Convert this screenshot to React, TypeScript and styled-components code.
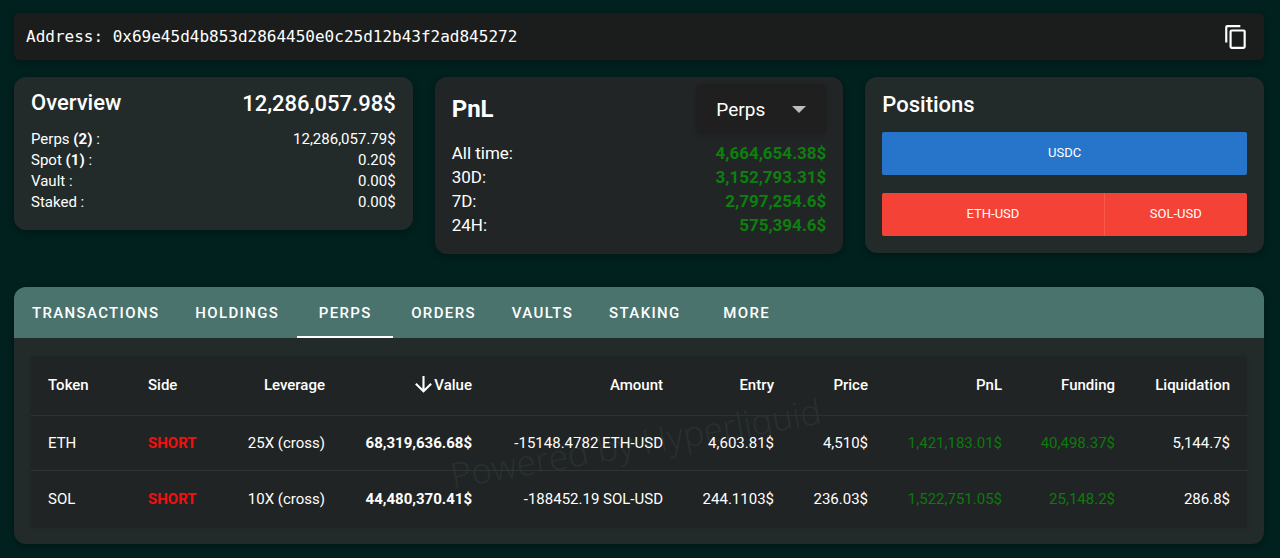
import React from "react";
import styled, { createGlobalStyle } from "styled-components";

const GlobalStyle = createGlobalStyle`
  *, *::before, *::after { box-sizing: border-box; }
  body {
    margin: 0;
    background: #00211e;
    color: #fff;
    font-family: Roboto, "Liberation Sans", sans-serif;
    font-size: 15px;
    line-height: 21px;
  }
`;

const Page = styled.main`
  padding: 13px 16px 14px 14px;
`;

const AddressBar = styled.header`
  display: flex;
  align-items: center;
  justify-content: space-between;
  height: 47px;
  padding: 0 15px 0 12px;
  border-radius: 6px;
  background: #1b1d1c;
  box-shadow: 0 2px 6px rgba(0, 0, 0, 0.3);
`;

const AddressText = styled.span`
  font-family: "DejaVu Sans Mono", "Liberation Mono", monospace;
  font-size: 16px;
`;

const IconButton = styled.button`
  display: flex;
  padding: 0;
  border: 0;
  background: none;
  color: #fff;
  cursor: pointer;
`;

const Cards = styled.div`
  display: grid;
  grid-template-columns: 399fr 409fr 399fr;
  gap: 22px;
  align-items: start;
  margin-top: 17px;
`;

const Card = styled.section<{ $tone?: string }>`
  padding: 10px 17px 17px;
  border-radius: 12px;
  background: ${(p) => p.$tone ?? "#232b2a"};
  box-shadow: 0 2px 6px rgba(0, 0, 0, 0.3);
`;

const CardHead = styled.div<{ $height: number; $gap: number }>`
  display: flex;
  align-items: center;
  justify-content: space-between;
  height: ${(p) => p.$height}px;
  margin-bottom: ${(p) => p.$gap}px;
`;

const CardTitle = styled.h2<{ $bold?: boolean }>`
  margin: 0;
  font-size: ${(p) => (p.$bold ? 24 : 22)}px;
  font-weight: ${(p) => (p.$bold ? 700 : 500)};
  line-height: 32px;
`;

const Total = styled.strong`
  font-size: 22px;
  font-weight: 500;
`;

const Stats = styled.dl<{ $large?: boolean }>`
  margin: 0;
  font-size: ${(p) => (p.$large ? 17 : 15)}px;
  line-height: ${(p) => (p.$large ? 24 : 21)}px;
`;

const StatRow = styled.div`
  display: flex;
  justify-content: space-between;
`;

const StatLabel = styled.dt``;

const StatValue = styled.dd<{ $gain?: boolean }>`
  margin: 0;
  color: ${(p) => (p.$gain ? "#0c800c" : "inherit")};
  font-weight: ${(p) => (p.$gain ? 700 : 400)};
`;

const SelectBox = styled.div`
  position: relative;
  width: 130px;
`;

const PeriodSelect = styled.select`
  width: 100%;
  height: 50px;
  padding: 0 40px 0 20px;
  border: 0;
  border-radius: 5px;
  background: #1f1f1f;
  color: #fff;
  font: inherit;
  font-size: 19px;
  appearance: none;
  box-shadow: 0 1px 4px rgba(0, 0, 0, 0.2);
`;

const Caret = styled.svg`
  position: absolute;
  top: 22px;
  right: 20px;
  pointer-events: none;
`;

const Bar = styled.div`
  display: flex;
  height: 43px;
  border-radius: 2px;
  overflow: hidden;
  & + & { margin-top: 18px; }
`;

const Segment = styled.button<{ $color: string; $share: number }>`
  flex: ${(p) => p.$share} 1 0;
  padding: 0 0 2px;
  border: 0;
  background: ${(p) => p.$color};
  color: #fff;
  font: inherit;
  font-size: 13px;
  cursor: pointer;
  & + & { border-left: 1px solid #f95a45; }
`;

const Panel = styled.section`
  margin-top: 33px;
  border-radius: 12px;
  background: #232b2a;
  overflow: hidden;
  box-shadow: 0 2px 6px rgba(0, 0, 0, 0.3);
`;

const Tabs = styled.div`
  display: flex;
  height: 51px;
  background: #4b736e;
`;

const Tab = styled.button<{ $active?: boolean }>`
  min-width: 96px;
  padding: 4px 18px 0;
  border: 0;
  border-bottom: 2px solid ${(p) => (p.$active ? "#fff" : "transparent")};
  background: none;
  color: #fff;
  font: inherit;
  font-weight: 500;
  letter-spacing: 0.09em;
  text-transform: uppercase;
  cursor: pointer;
`;

const TableWrap = styled.div`
  position: relative;
  margin: 18px 17px 16px;
  padding-bottom: 1px;
  background: #212424;
  box-shadow: 0 0 2px #212424;
`;

const Table = styled.table`
  position: relative;
  width: 100%;
  table-layout: fixed;
  border-collapse: separate;
  border-spacing: 0;
`;

const Col = styled.col<{ $width: number }>`
  width: ${(p) => p.$width}px;
`;

const HeadCell = styled.th<{ $left?: boolean }>`
  height: 60px;
  padding: 0 18px 0 17px;
  border-bottom: 1px solid #2b3231;
  font-weight: 500;
  text-align: ${(p) => (p.$left ? "left" : "right")};
  white-space: nowrap;
`;

const SortArrow = styled.svg`
  margin-right: 2px;
  vertical-align: -3px;
`;

const Cell = styled.td<{ $left?: boolean; $bold?: boolean; $color?: string }>`
  height: 55px;
  padding: 0 18px 0 17px;
  color: ${(p) => p.$color ?? "inherit"};
  font-weight: ${(p) => (p.$bold ? 700 : 400)};
  text-align: ${(p) => (p.$left ? "left" : "right")};
  white-space: nowrap;
  tr:not(:last-child) > & { border-bottom: 1px solid #2e3534; }
  tr:last-child > & { height: 56px; }
`;

const Watermark = styled.div`
  position: absolute;
  inset: 0;
  display: flex;
  align-items: center;
  justify-content: center;
  padding-right: 6px;
  color: #28312f;
  font-family: "Open Sans", sans-serif;
  font-size: 35px;
  font-weight: 300;
  pointer-events: none;
  & > span { transform: rotate(-10deg); }
`;

const RED = "#f01010";
const GREEN = "#0c7a0c";

const overview = [
  { label: "Perps", count: "(2)", value: "12,286,057.79$" },
  { label: "Spot", count: "(1)", value: "0.20$" },
  { label: "Vault", value: "0.00$" },
  { label: "Staked", value: "0.00$" },
];

const pnl = [
  ["All time:", "4,664,654.38$"],
  ["30D:", "3,152,793.31$"],
  ["7D:", "2,797,254.6$"],
  ["24H:", "575,394.6$"],
];

const tabs = ["Transactions", "Holdings", "Perps", "Orders", "Vaults", "Staking", "More"];

const columns = [
  { name: "Token", width: 100, left: true },
  { name: "Side", width: 96, left: true },
  { name: "Leverage", width: 116 },
  { name: "Value", width: 147, sorted: true, bold: true },
  { name: "Amount", width: 191 },
  { name: "Entry", width: 111 },
  { name: "Price", width: 94 },
  { name: "PnL", width: 134, color: GREEN },
  { name: "Funding", width: 113, color: GREEN },
  { name: "Liquidation", width: 115 },
];

const rows = [
  ["ETH", "SHORT", "25X (cross)", "68,319,636.68$", "-15148.4782 ETH-USD", "4,603.81$", "4,510$", "1,421,183.01$", "40,498.37$", "5,144.7$"],
  ["SOL", "SHORT", "10X (cross)", "44,480,370.41$", "-188452.19 SOL-USD", "244.1103$", "236.03$", "1,522,751.05$", "25,148.2$", "286.8$"],
];

export default function App() {
  return (
    <Page>
      <GlobalStyle />
      <AddressBar>
        <AddressText>Address: 0x69e45d4b853d2864450e0c25d12b43f2ad845272</AddressText>
        <IconButton aria-label="Copy address">
          <svg width="26" height="26" viewBox="0 0 24 24" fill="currentColor">
            <path d="M19,21H8V7H19M19,5H8A2,2 0 0,0 6,7V21A2,2 0 0,0 8,23H19A2,2 0 0,0 21,21V7A2,2 0 0,0 19,5M16,1H4A2,2 0 0,0 2,3V17H4V3H16V1Z" />
          </svg>
        </IconButton>
      </AddressBar>

      <Cards>
        <Card>
          <CardHead $height={32} $gap={10}>
            <CardTitle>Overview</CardTitle>
            <Total>12,286,057.98$</Total>
          </CardHead>
          <Stats>
            {overview.map((s) => (
              <StatRow key={s.label}>
                <StatLabel>
                  {s.label} {s.count && <b>{s.count} </b>}:
                </StatLabel>
                <StatValue>{s.value}</StatValue>
              </StatRow>
            ))}
          </Stats>
        </Card>

        <Card $tone="#222526">
          <CardHead $height={44} $gap={10}>
            <CardTitle $bold>PnL</CardTitle>
            <SelectBox>
              <PeriodSelect aria-label="PnL type" defaultValue="Perps">
                <option>Perps</option>
                <option>Spot</option>
              </PeriodSelect>
              <Caret width="14" height="7" viewBox="0 0 14 7">
                <path d="M0 0H14L7 7Z" fill="#bcbcbc" />
              </Caret>
            </SelectBox>
          </CardHead>
          <Stats $large>
            {pnl.map(([label, value]) => (
              <StatRow key={label}>
                <StatLabel>{label}</StatLabel>
                <StatValue $gain>{value}</StatValue>
              </StatRow>
            ))}
          </Stats>
        </Card>

        <Card>
          <CardHead $height={36} $gap={9}>
            <CardTitle>Positions</CardTitle>
          </CardHead>
          <Bar>
            <Segment $color="#2775ca" $share={1}>USDC</Segment>
          </Bar>
          <Bar>
            <Segment $color="#f44336" $share={222}>ETH-USD</Segment>
            <Segment $color="#f44336" $share={143}>SOL-USD</Segment>
          </Bar>
        </Card>
      </Cards>

      <Panel>
        <Tabs role="tablist">
          {tabs.map((t) => (
            <Tab key={t} role="tab" aria-selected={t === "Perps"} $active={t === "Perps"}>
              {t}
            </Tab>
          ))}
        </Tabs>
        <TableWrap>
          <Watermark aria-hidden="true">
            <span>Powered by Hyperliquid</span>
          </Watermark>
          <Table>
            <colgroup>
              {columns.map((c) => (
                <Col key={c.name} $width={c.width} />
              ))}
            </colgroup>
            <thead>
              <tr>
                {columns.map((c) => (
                  <HeadCell key={c.name} $left={c.left}>
                    {c.sorted && (
                      <SortArrow width="17" height="17" viewBox="4 4 16 16" fill="#fff">
                        <path d="M11,4H13V16L18.5,10.5L19.92,11.92L12,19.84L4.08,11.92L5.5,10.5L11,16V4Z" />
                      </SortArrow>
                    )}
                    {c.name}
                  </HeadCell>
                ))}
              </tr>
            </thead>
            <tbody>
              {rows.map((row) => (
                <tr key={row[0]}>
                  {row.map((value, i) => (
                    <Cell
                      key={columns[i].name}
                      $left={columns[i].left}
                      $bold={columns[i].bold || i === 1}
                      $color={i === 1 ? RED : columns[i].color}
                    >
                      {value}
                    </Cell>
                  ))}
                </tr>
              ))}
            </tbody>
          </Table>
        </TableWrap>
      </Panel>
    </Page>
  );
}
